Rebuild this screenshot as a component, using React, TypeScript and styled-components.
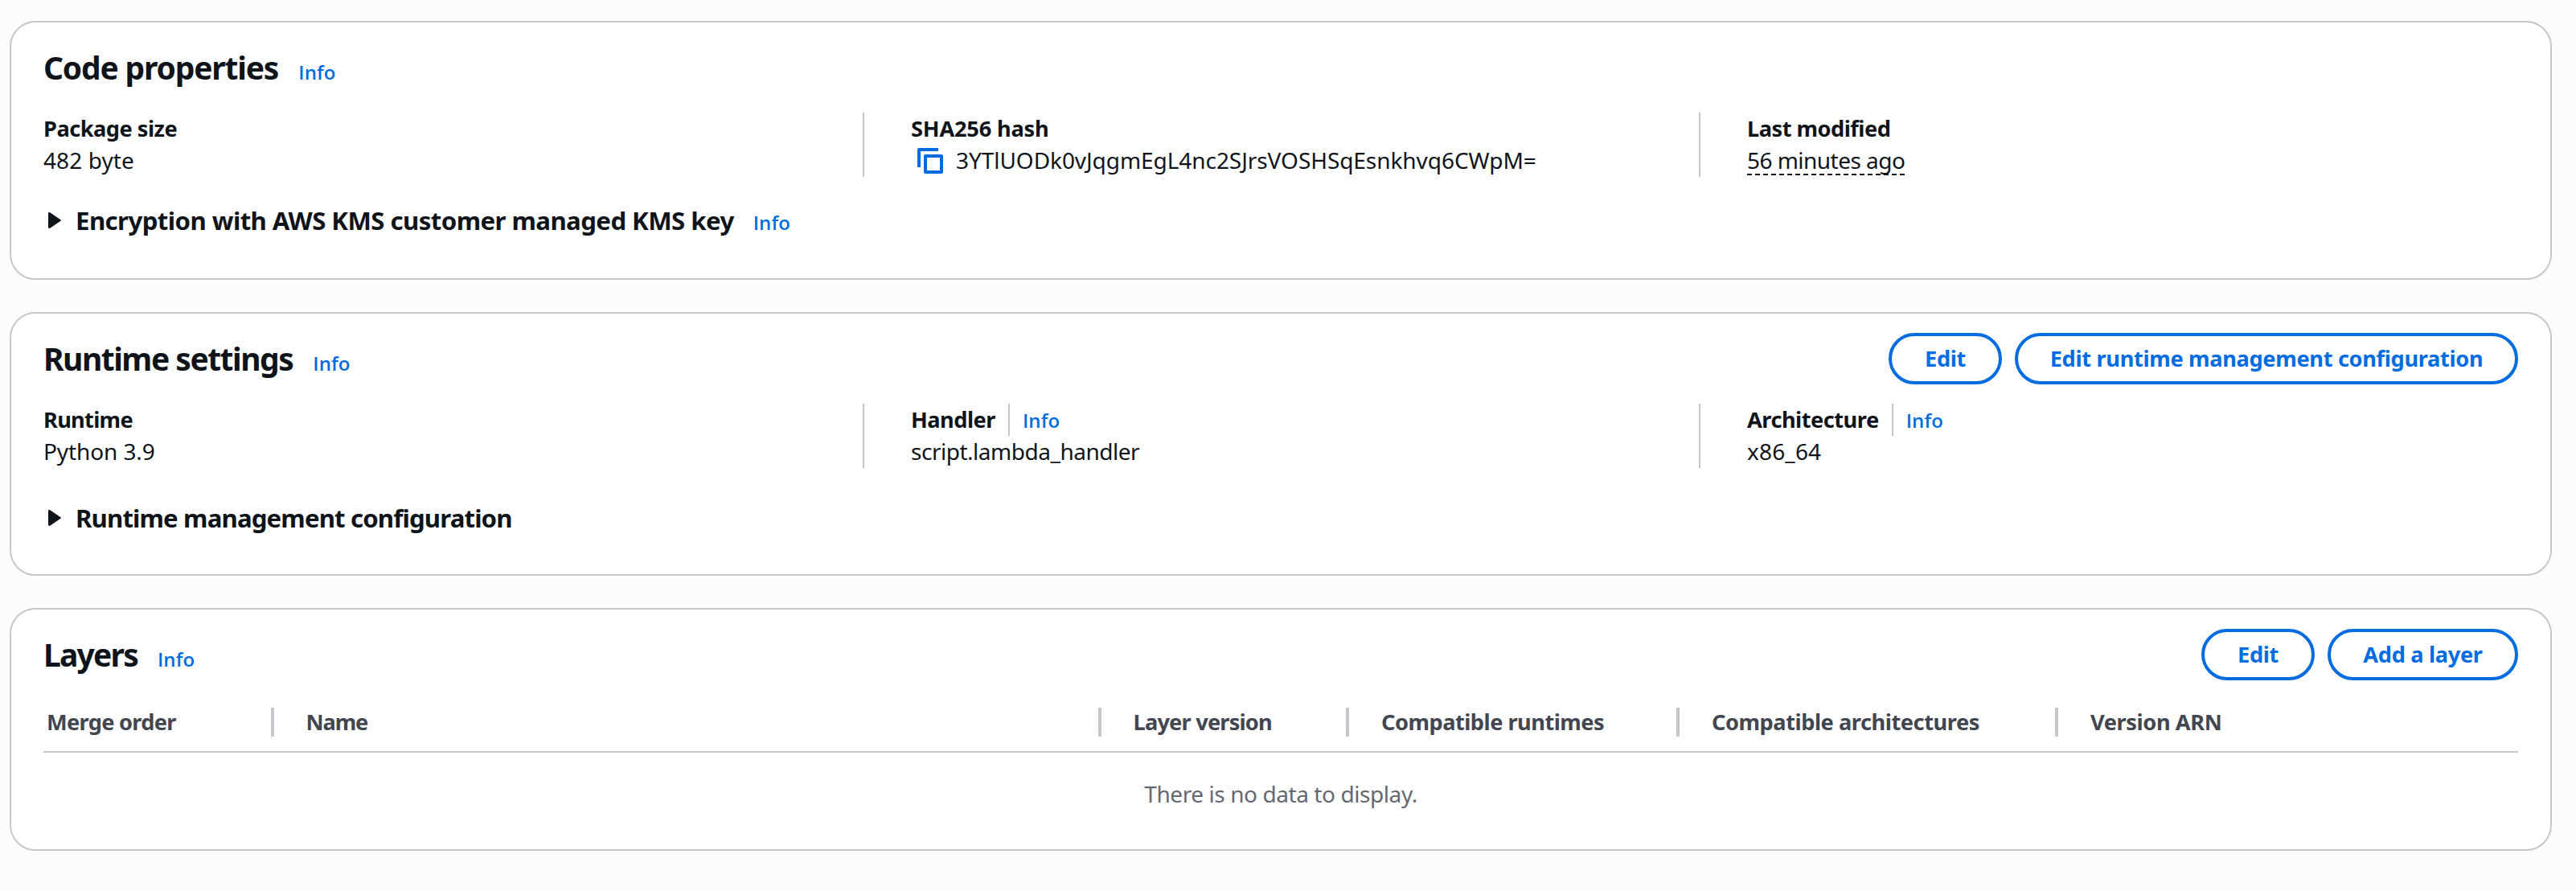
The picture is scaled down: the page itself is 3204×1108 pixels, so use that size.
import React from 'react';
import styled, { createGlobalStyle } from 'styled-components';

const GlobalStyle = createGlobalStyle`
  *, *::before, *::after { box-sizing: border-box; }
  body {
    margin: 0;
    background: #fcfcfc;
    color: #0f141a;
    font-family: "Noto Sans", "Open Sans", sans-serif;
    font-size: 28px;
    line-height: 40px;
  }
`;

const Page = styled.main`
  display: flex;
  flex-direction: column;
  gap: 40px;
  min-height: 1108px;
  padding: 26px 30px 50px 12px;
`;

const Card = styled.section<{ $height: number }>`
  height: ${(p) => p.$height}px;
  padding: 24px 40px 0;
  background: #fff;
  border: 2px solid #c6c6cd;
  border-radius: 32px;
`;

const CardHeader = styled.header`
  display: flex;
  align-items: flex-start;
  justify-content: space-between;
  height: 64px;
`;

const TitleGroup = styled.div`
  display: flex;
  align-items: baseline;
  gap: 25px;
  padding-top: 8px;
`;

const Title = styled.h2<{ $track: number }>`
  margin: 0;
  font-size: 39px;
  line-height: 47px;
  font-weight: 700;
  letter-spacing: ${(p) => p.$track}px;
`;

const InfoLink = styled.a`
  color: #006ce0;
  font-family: "Open Sans", "Noto Sans", sans-serif;
  font-size: 24px;
  line-height: 31px;
  font-weight: 600;
  letter-spacing: 0.1px;
  text-decoration: none;
`;

const Actions = styled.div`
  display: flex;
  gap: 16px;
`;

const Button = styled.button<{ $width: number }>`
  width: ${(p) => p.$width}px;
  height: 64px;
  padding: 0 0 1px;
  background: #fff;
  border: 4px solid #006ce0;
  border-radius: 40px;
  color: #006ce0;
  font: 700 27.2px/39px "Noto Sans", "Open Sans", sans-serif;
  letter-spacing: -0.33px;
  white-space: nowrap;
`;

const Fields = styled.div`
  display: grid;
  grid-template-columns: 1019px 1040px 1019px;
  margin-top: 24px;
`;

const Field = styled.div`
  height: 80px;
  & + & {
    padding-left: 58px;
    border-left: 2px solid #c6c6cd;
  }
`;

const FieldLabel = styled.div`
  display: flex;
  height: 40px;
`;

const LabelText = styled.span<{ $track?: number }>`
  font-size: 27.2px;
  line-height: 39px;
  font-weight: 700;
  letter-spacing: ${(p) => p.$track ?? -0.5}px;
`;

const LabelInfo = styled.span`
  display: flex;
  align-items: flex-start;
  margin-left: 16px;
  padding: 5px 0 0 16px;
  border-left: 2px solid #c6c6cd;
`;

const Value = styled.div<{ $track?: number }>`
  display: flex;
  height: 40px;
  line-height: 38px;
  letter-spacing: ${(p) => p.$track ?? 0}px;
`;

const CopyIcon = styled.svg`
  width: 32px;
  height: 32px;
  margin: 4px 16px 0 8px;
  fill: none;
  stroke: #006ce0;
  stroke-width: 4;
  stroke-linejoin: round;
`;

const RelativeTime = styled.span`
  height: 38px;
  border-bottom: 2px dashed #0f141a;
`;

const Expandable = styled.div<{ $gap: number }>`
  display: flex;
  align-items: baseline;
  margin-top: ${(p) => p.$gap}px;
  padding-left: 6px;
`;

const Caret = styled.svg`
  width: 16px;
  height: 20px;
  margin: 10px 18px 0 0;
  align-self: flex-start;
  fill: #0f141a;
`;

const ExpandableTitle = styled.h3<{ $track: number }>`
  margin: 0 24px 0 0;
  font-size: 31.2px;
  line-height: 40px;
  font-weight: 700;
  letter-spacing: ${(p) => p.$track}px;
`;

const TableHead = styled.div`
  display: grid;
  grid-template-columns: 286.5px 1029px 308.5px 411px 471px 1fr;
  height: 80px;
  margin-top: 10px;
  padding-top: 24px;
  border-bottom: 2px solid #c6c6cd;
`;

const HeadCell = styled.div<{ $track?: number }>`
  height: 36px;
  padding-left: 40px;
  border-right: 4px solid #c6c6cd;
  color: #424650;
  font-size: 27.2px;
  font-weight: 700;
  line-height: 35px;
  letter-spacing: ${(p) => p.$track ?? -0.5}px;
  &:first-child { padding-left: 4px; }
  &:last-child { border-right: 0; }
`;

const EmptyState = styled.div`
  padding-top: 31px;
  color: #656871;
  letter-spacing: -0.42px;
  text-align: center;
`;

const Info = () => <InfoLink>Info</InfoLink>;

const CaretRight = () => (
  <Caret viewBox="0 0 16 20">
    <path d="M0 1.4C0 .2 1.2-.4 2.2.3L15.4 9.2C16.2 9.7 16.2 10.3 15.4 10.8L2.2 19.7C1.2 20.4 0 19.8 0 18.6Z" />
  </Caret>
);

export default function App() {
  return (
    <>
      <GlobalStyle />
      <Page>
        <Card $height={322}>
          <CardHeader>
            <TitleGroup>
              <Title $track={-1.18}>Code properties</Title>
              <Info />
            </TitleGroup>
          </CardHeader>
          <Fields>
            <Field>
              <FieldLabel><LabelText>Package size</LabelText></FieldLabel>
              <Value $track={0.1}>482 byte</Value>
            </Field>
            <Field>
              <FieldLabel><LabelText $track={-0.2}>SHA256 hash</LabelText></FieldLabel>
              <Value $track={-0.06}>
                <CopyIcon viewBox="0 0 32 32">
                  <path d="M2 24V2H26" />
                  <rect x="10" y="10" width="20" height="20" />
                </CopyIcon>
                3YTlUODk0vJqgmEgL4nc2SJrsVOSHSqEsnkhvq6CWpM=
              </Value>
            </Field>
            <Field>
              <FieldLabel><LabelText>Last modified</LabelText></FieldLabel>
              <Value $track={-0.53}><RelativeTime>56 minutes ago</RelativeTime></Value>
            </Field>
          </Fields>
          <Expandable $gap={34}>
            <CaretRight />
            <ExpandableTitle $track={-0.57}>Encryption with AWS KMS customer managed KMS key</ExpandableTitle>
            <Info />
          </Expandable>
        </Card>

        <Card $height={328}>
          <CardHeader>
            <TitleGroup>
              <Title $track={-1.5}>Runtime settings</Title>
              <Info />
            </TitleGroup>
            <Actions>
              <Button $width={141}>Edit</Button>
              <Button $width={626}>Edit runtime management configuration</Button>
            </Actions>
          </CardHeader>
          <Fields>
            <Field>
              <FieldLabel><LabelText $track={-0.7}>Runtime</LabelText></FieldLabel>
              <Value $track={-0.1}>Python 3.9</Value>
            </Field>
            <Field>
              <FieldLabel>
                <LabelText>Handler</LabelText>
                <LabelInfo><Info /></LabelInfo>
              </FieldLabel>
              <Value $track={-0.48}>script.lambda_handler</Value>
            </Field>
            <Field>
              <FieldLabel>
                <LabelText>Architecture</LabelText>
                <LabelInfo><Info /></LabelInfo>
              </FieldLabel>
              <Value $track={0.15}>x86_64</Value>
            </Field>
          </Fields>
          <Expandable $gap={42}>
            <CaretRight />
            <ExpandableTitle $track={-0.86}>Runtime management configuration</ExpandableTitle>
          </Expandable>
        </Card>

        <Card $height={302}>
          <CardHeader>
            <TitleGroup>
              <Title $track={-1.8}>Layers</Title>
              <Info />
            </TitleGroup>
            <Actions>
              <Button $width={141}>Edit</Button>
              <Button $width={237}>Add a layer</Button>
            </Actions>
          </CardHeader>
          <TableHead>
            <HeadCell $track={-0.7}>Merge order</HeadCell>
            <HeadCell $track={-1.1}>Name</HeadCell>
            <HeadCell $track={-0.8}>Layer version</HeadCell>
            <HeadCell>Compatible runtimes</HeadCell>
            <HeadCell $track={-0.45}>Compatible architectures</HeadCell>
            <HeadCell $track={-0.4}>Version ARN</HeadCell>
          </TableHead>
          <EmptyState>There is no data to display.</EmptyState>
        </Card>
      </Page>
    </>
  );
}
